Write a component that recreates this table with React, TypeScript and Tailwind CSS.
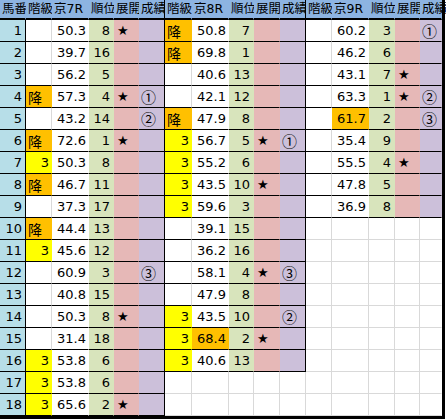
import React from "react";

type Row = [string, string, string, string, string, boolean?];

const g7: Row[] = [
  ["", "50.3", "8", "★", ""],
  ["", "39.7", "16", "", ""],
  ["", "56.2", "5", "", ""],
  ["降", "57.3", "4", "★", "①"],
  ["", "43.2", "14", "", "②"],
  ["降", "72.6", "1", "★", ""],
  ["3", "50.3", "8", "", ""],
  ["降", "46.7", "11", "", ""],
  ["", "37.3", "17", "", ""],
  ["降", "44.4", "13", "", ""],
  ["3", "45.6", "12", "", ""],
  ["", "60.9", "3", "", "③"],
  ["", "40.8", "15", "", ""],
  ["", "50.3", "8", "★", ""],
  ["", "31.4", "18", "", ""],
  ["3", "53.8", "6", "", ""],
  ["3", "53.8", "6", "", ""],
  ["3", "65.6", "2", "★", ""],
];

const g8: Row[] = [
  ["降", "50.8", "7", "", ""],
  ["降", "69.8", "1", "", ""],
  ["", "40.6", "13", "", ""],
  ["", "42.1", "12", "", ""],
  ["降", "47.9", "8", "", ""],
  ["3", "56.7", "5", "★", "①"],
  ["3", "55.2", "6", "", ""],
  ["3", "43.5", "10", "★", ""],
  ["3", "59.6", "3", "", ""],
  ["", "39.1", "15", "", ""],
  ["", "36.2", "16", "", ""],
  ["", "58.1", "4", "★", "③"],
  ["", "47.9", "8", "", ""],
  ["3", "43.5", "10", "", "②"],
  ["3", "68.4", "2", "★", "", true],
  ["3", "40.6", "13", "", ""],
];

const g9: Row[] = [
  ["", "60.2", "3", "", "①"],
  ["", "46.2", "6", "", ""],
  ["", "43.1", "7", "★", ""],
  ["", "63.3", "1", "★", "②"],
  ["", "61.7", "2", "", "③", true],
  ["", "35.4", "9", "", ""],
  ["", "55.5", "4", "★", ""],
  ["", "47.8", "5", "", ""],
  ["", "36.9", "8", "", ""],
];

const BG = {
  white: "bg-white",
  blue: "bg-[#b7dee8]",
  green: "bg-[#d8e4bc]",
  pink: "bg-[#e6b8b7]",
  purple: "bg-[#ccc0da]",
  orange: "bg-[#ffc000]",
  yellow: "bg-[#ffff00]",
  header: "bg-[#8db4e2]",
};
type BgKey = keyof typeof BG;

const RB = {
  black: "border-r border-r-black",
  gray: "border-r border-r-[#d9d9d9]",
  none: "border-r border-r-transparent",
};
const BB = {
  black: "border-b border-b-black",
  gray: "border-b border-b-[#d9d9d9]",
  header: "border-b-2 border-b-black",
};

function Cell({
  bg,
  rb,
  bb,
  align = "right",
  children,
  cls = "",
}: {
  bg: BgKey;
  rb: keyof typeof RB;
  bb: keyof typeof BB;
  align?: "left" | "right";
  children?: React.ReactNode;
  cls?: string;
}) {
  return (
    <div
      className={`box-border flex items-center overflow-visible whitespace-nowrap ${BG[bg]} ${RB[rb]} ${BB[bb]} ${
        align === "right" ? "justify-end pr-[2px]" : "justify-start pl-[2px]"
      } ${cls}`}
    >
      {children}
    </div>
  );
}

function groupCells(row: Row | undefined, last: boolean, key: string) {
  if (!row) {
    return [
      <Cell key={key + "a"} bg="white" rb="gray" bb="gray" />,
      <Cell key={key + "b"} bg="white" rb="gray" bb="gray" />,
      <Cell key={key + "c"} bg="white" rb="gray" bb="gray" />,
      <Cell key={key + "d"} bg="white" rb="gray" bb="gray" />,
      <Cell key={key + "e"} bg="white" rb={last ? "none" : "gray"} bb="gray" />,
    ];
  }
  const [kyu, val, rank, ten, sei, hi] = row;
  const kyuBg: BgKey = kyu === "降" ? "orange" : kyu === "3" ? "yellow" : "white";
  const kyuRb = kyu === "" && !hi ? "gray" : "none";
  return [
    <Cell key={key + "a"} bg={kyuBg} rb={kyuRb} bb="black" align={kyu === "降" ? "left" : "right"} cls={kyu === "降" ? "pl-[1px]" : ""}>
      {kyu === "降" ? (
        <span className="font-['Noto_Sans_CJK_JP'] text-[14px] leading-none">降</span>
      ) : (
        kyu
      )}
    </Cell>,
    <Cell key={key + "b"} bg={hi ? "orange" : "white"} rb="none" bb="black">
      {val}
    </Cell>,
    <Cell key={key + "c"} bg="green" rb="none" bb="black" cls="pr-[3px]">
      {rank}
    </Cell>,
    <Cell key={key + "d"} bg="pink" rb="none" bb="black" align="left" cls="pl-[3px]">
      {ten && <span className="text-[13px] leading-none">{ten}</span>}
    </Cell>,
    <Cell key={key + "e"} bg="purple" rb={last ? "none" : "black"} bb="black" align="left" cls="pl-[0px]">
      {sei && (
        <span className="font-['Noto_Sans_CJK_JP'] text-[15px] leading-none">{sei}</span>
      )}
    </Cell>,
  ];
}

const headers = [
  "馬番",
  "階級",
  "京7R",
  "順位",
  "展開",
  "成績",
  "階級",
  "京8R",
  "順位",
  "展開",
  "成績",
  "階級",
  "京9R",
  "順位",
  "展開",
  "成績",
];

export default function App() {
  return (
    <div className="w-[446px] h-[419px] bg-white overflow-hidden">
      <div className="w-[445px] border-r-[3px] border-b-[3px] border-black box-border font-['DejaVu_Sans','Noto_Sans_CJK_JP',sans-serif] text-[13px] text-black leading-none">
        <div className="grid grid-cols-[26px_26px_37px_25px_25px_26px_27px_37px_25px_26px_26px_26px_37px_26px_25px_22px] grid-rows-[20px_repeat(18,22px)]">
          {headers.map((h, i) => (
            <Cell
              key={"h" + i}
              bg="header"
              rb={i === 5 || i === 10 ? "black" : "none"}
              bb="header"
              align="left"
              cls={`text-[12.5px] ${i === 0 ? "pl-[0px]" : "pl-[1px]"}`}
            >
              {h}
            </Cell>
          ))}
          {Array.from({ length: 18 }, (_, r) => (
            <React.Fragment key={"r" + r}>
              <Cell bg="blue" rb="black" bb="black" cls="pr-[3px]">
                {r + 1}
              </Cell>
              {groupCells(g7[r], false, "g7" + r)}
              {groupCells(g8[r], false, "g8" + r)}
              {groupCells(g9[r], true, "g9" + r)}
            </React.Fragment>
          ))}
        </div>
      </div>
    </div>
  );
}
